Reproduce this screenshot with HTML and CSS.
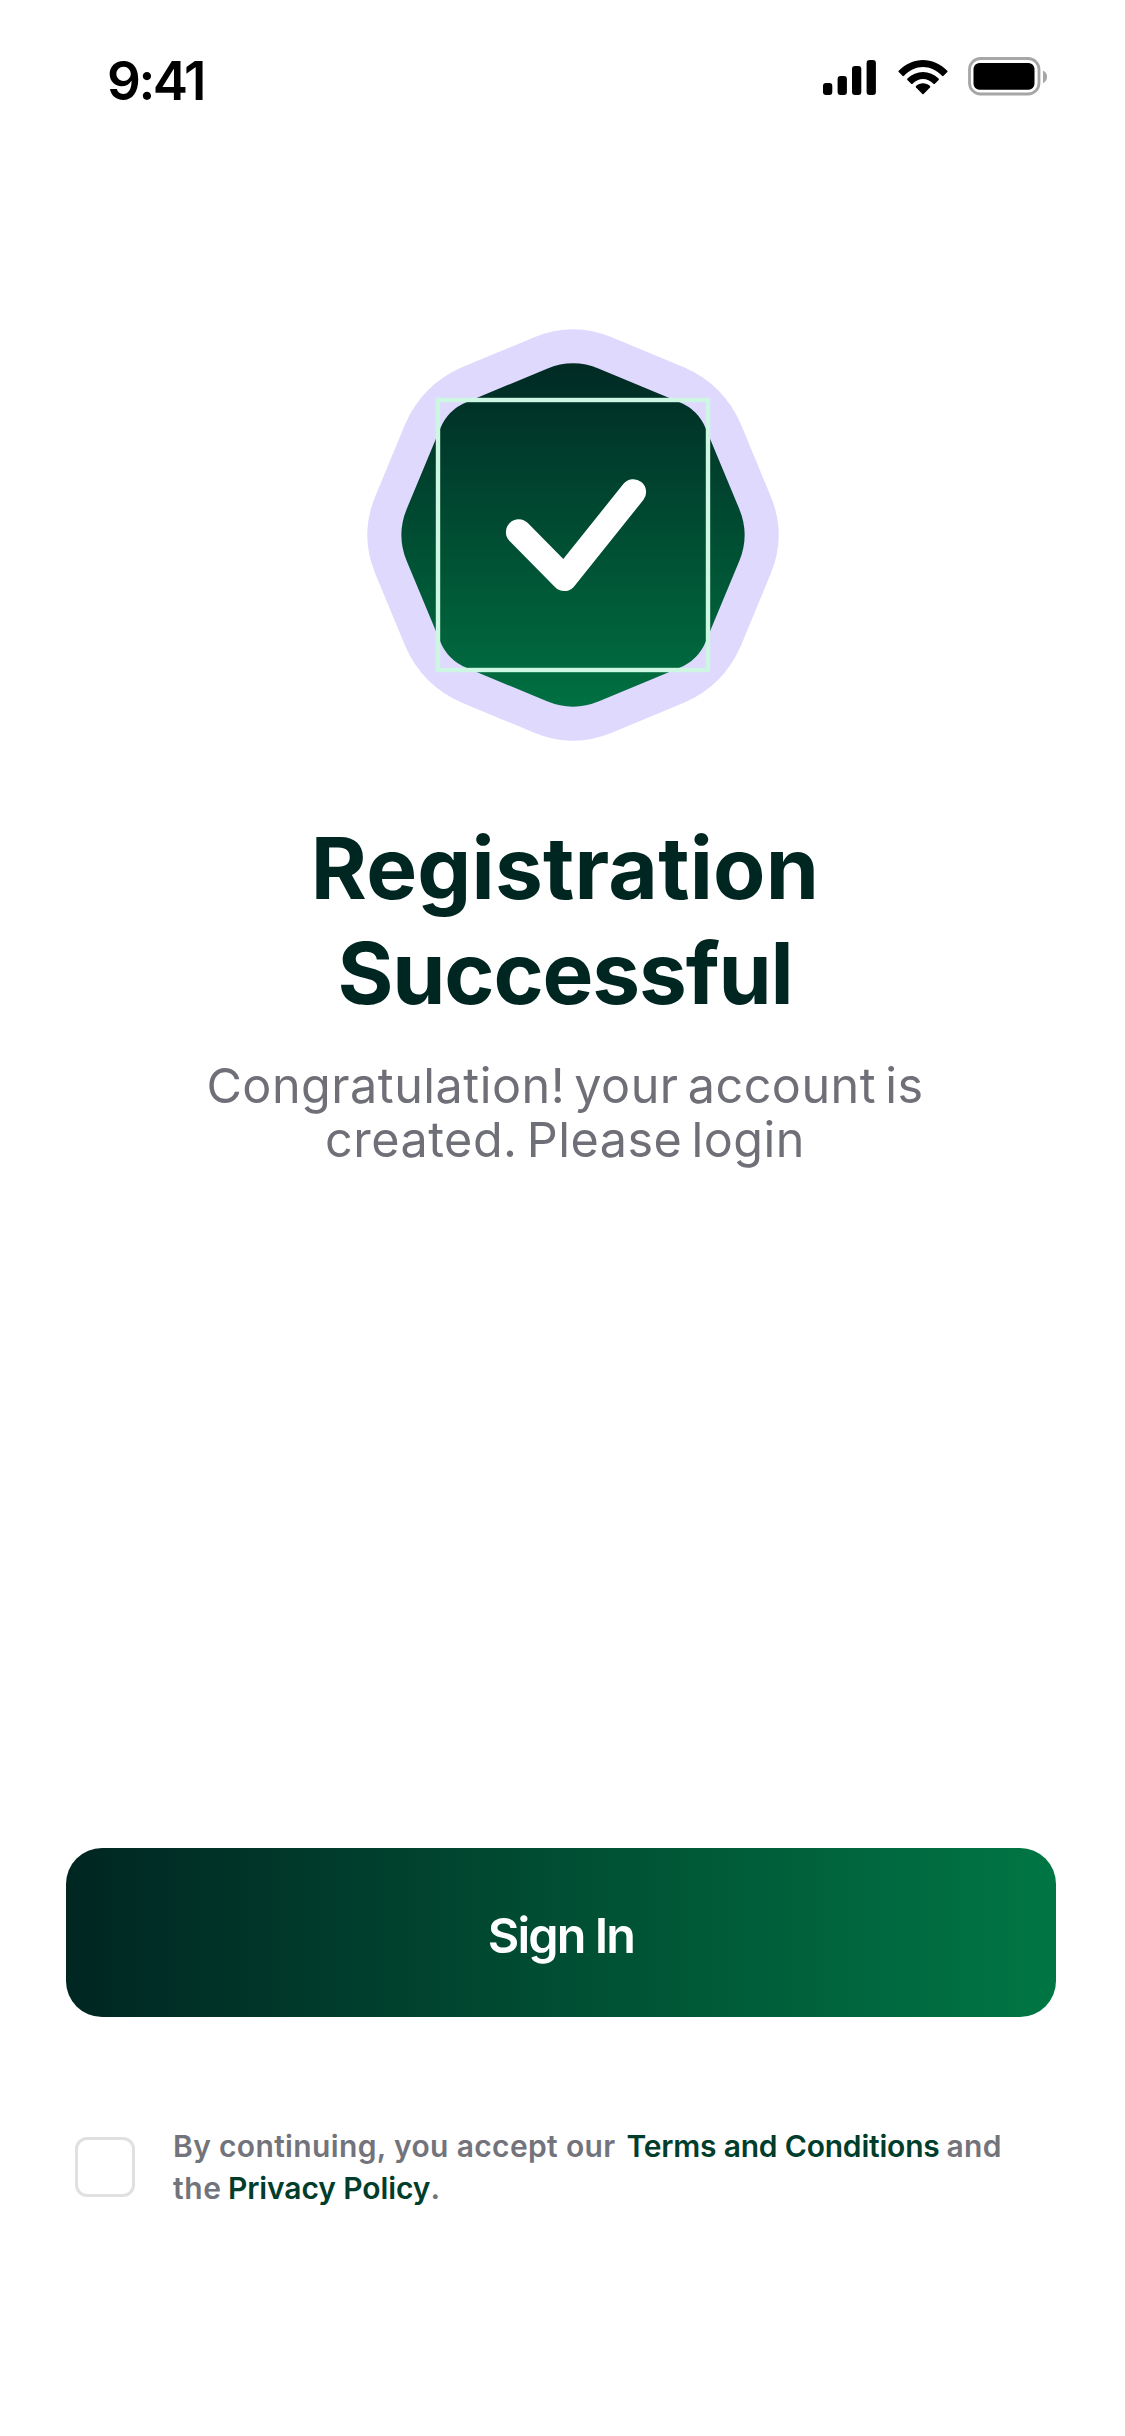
FILE: index.html
```html
<!DOCTYPE html>
<html lang="en">
<head>
  <meta charset="utf-8">
  <title>Registration Successful</title>
  <link rel="stylesheet" href="styles.css">
</head>
<body>
  <div class="screen">
    <header class="status">
      <span class="time">9:41</span>
      <div class="indicators">
        <svg class="signal" width="54" height="35" viewBox="0 0 54 35">
          <rect x="0" y="23" width="9.3" height="12" rx="3"/>
          <rect x="14.6" y="16" width="9.3" height="19" rx="3"/>
          <rect x="29" y="6" width="9.3" height="29" rx="3"/>
          <rect x="43.6" y="0" width="9.3" height="35" rx="3"/>
        </svg>
        <svg class="wifi" width="50" height="35" viewBox="0 0 50 35">
          <path d="M.7 10.8C15-3.6 35-3.6 49.3 10.8Q49.8 11.4 49.3 12L45.3 16Q44.7 16.4 44 15.8C33 4.2 17 4.2 6 15.8Q5.3 16.4 4.7 16L.7 12Q.2 11.4.7 10.8Z"/>
          <path d="M9.4 18.6C18 9.8 32 9.8 40.6 18.6Q41.2 19.3 40.6 20L36.6 23.9Q36 24.3 35.4 23.8C29.5 17.4 20.5 17.4 14.6 23.8Q14 24.3 13.4 23.9L9.4 20Q8.8 19.3 9.4 18.6Z"/>
          <path d="M18 26.1C22 22.4 28 22.4 32 26.1Q32.6 26.8 32 27.5L25.6 34Q25 34.5 24.4 34L18 27.5Q17.4 26.8 18 26.1Z"/>
        </svg>
        <svg class="battery" width="81" height="39" viewBox="0 0 81 39">
          <rect x="1.5" y="1.5" width="69.5" height="35.5" rx="11" fill="none" stroke="#a6a6a6" stroke-width="2.8"/>
          <rect x="5.5" y="5.9" width="61" height="26.8" rx="6"/>
          <path d="M75 13.5Q79 15.5 79 19.8T75 26.2Z" fill="#a6a6a6"/>
        </svg>
      </div>
    </header>

    <main class="content">
      <svg class="badge" width="412" height="412" viewBox="-206 -206 412 412">
        <defs>
          <linearGradient id="badge-fill" x1="0" y1="0" x2="0" y2="1">
            <stop offset="0" stop-color="#002a24"/>
            <stop offset="1" stop-color="#007041"/>
          </linearGradient>
        </defs>
        <path fill="#e0d9fe" d="M-39.3-197.5Q0-214 39.3-197.5L111-167.8Q150.6-150.6 167.8-111L197.5-39.3Q214 0 197.5 39.3L167.8 111Q150.6 150.6 111 167.8L39.3 197.5Q0 214-39.3 197.5L-111 167.8Q-150.6 150.6-167.8 111L-197.5 39.3Q-214 0-197.5-39.3L-167.8-111Q-150.6-150.6-111-167.8Z"/>
        <path fill="url(#badge-fill)" d="M-26-166.3Q0-177 26-166.3L106-133Q125.3-125.3 133-106L166.3-26Q177 0 166.3 26L133 106Q125.3 125.3 106 133L26 166.3Q0 177-26 166.3L-106 133Q-125.3 125.3-133 106L-166.3 26Q-177 0-166.3-26L-133-106Q-125.3-125.3-106-133Z"/>
        <rect x="-135" y="-135" width="270" height="270" fill="none" stroke="#cdf7e3" stroke-width="4.4"/>
        <path d="M-54.3-3L-8.7 43.3 60.3-43" fill="none" stroke="#fff" stroke-width="25.6" stroke-linecap="round" stroke-linejoin="round"/>
      </svg>
      <h1 class="title"><span class="title-top">Registration</span><span class="title-bottom">Successful</span></h1>
      <p class="message">Congratulation! your account is<br>created. Please login</p>
    </main>

    <footer class="actions">
      <button class="sign-in" type="button">Sign In</button>
      <div class="consent">
        <span class="checkbox" role="checkbox" aria-checked="false"></span>
        <p class="legal">By continuing, you accept our <a class="link terms">Terms and Conditions</a> <span class="and">and</span><br><span class="the">the</span> <a class="link privacy">Privacy Policy</a>.</p>
      </div>
    </footer>
  </div>
</body>
</html>
```
FILE: styles.css
```css
* { box-sizing: border-box; }

body {
  margin: 0;
  background: #fff;
  font-family: Inter, "Liberation Sans", sans-serif;
}

.screen {
  width: 1125px;
  height: 2436px;
  display: flex;
  flex-direction: column;
}

.status {
  display: flex;
  justify-content: space-between;
  align-items: flex-start;
  height: 329px;
  padding: 51px 76px 0 107px;
}

.time {
  font-size: 53px;
  font-weight: 600;
  line-height: 60px;
  letter-spacing: -2.5px;
  color: #000;
}

.indicators {
  display: flex;
  align-items: flex-start;
  padding-top: 6px;
}

.signal { margin: 3px 21px 0 0; }
.wifi { margin: 3px 20px 0 0; }

.content {
  display: flex;
  flex-direction: column;
  align-items: center;
  height: 1519px;
  padding-left: 5px;
  text-align: center;
}

.badge { margin-left: 15px; flex: none; }

.title {
  display: flex;
  flex-direction: column;
  margin: 75px 0 33px;
  font-size: 85.5px;
  font-weight: 700;
  line-height: 105px;
  color: #002622;
}

.title-top { letter-spacing: 0.2px; }
.title-bottom { letter-spacing: -1.2px; }

.message {
  margin: 0;
  font-size: 48.5px;
  font-weight: 400;
  line-height: 54px;
  letter-spacing: 0.5px;
  word-spacing: -5px;
  color: #6f6f78;
}

.actions { padding: 0 69px 0 66px; }

.sign-in {
  display: block;
  width: 990px;
  height: 169px;
  padding: 6px 0 0;
  border: 0;
  border-radius: 36px;
  background: linear-gradient(90deg, #002622, #007644);
  font: 600 48.5px Inter, "Liberation Sans", sans-serif;
  letter-spacing: -1.9px;
  color: #fff;
}

.consent {
  display: flex;
  align-items: center;
  gap: 38px;
  margin-top: 108px;
  padding-left: 9px;
}

.checkbox {
  flex: none;
  width: 60px;
  height: 60px;
  border: 3px solid #e0e0e0;
  border-radius: 12px;
}

.legal {
  margin: 0;
  font-size: 30px;
  font-weight: 600;
  line-height: 42px;
  letter-spacing: 0.35px;
  white-space: nowrap;
  color: #73737c;
}

.link { color: #003d2b; }
.terms { margin-left: 3px; letter-spacing: -0.2px; }
.and { margin-left: -1px; }
.the { letter-spacing: 0.6px; }
.privacy { margin-left: -1.5px; letter-spacing: -0.1px; }
```
